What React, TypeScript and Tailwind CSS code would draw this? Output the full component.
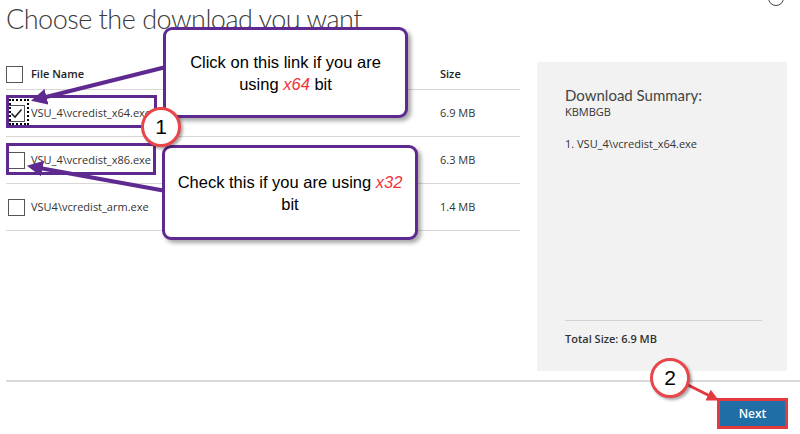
const files = [
  { name: "VSU_4\\vcredist_x64.exe", size: "6.9 MB", checked: true },
  { name: "VSU_4\\vcredist_x86.exe", size: "6.3 MB", checked: false },
  { name: "VSU4\\vcredist_arm.exe", size: "1.4 MB", checked: false },
];

const Box = ({ checked = false }: { checked?: boolean }) => {
  return (
    <span className="w-[17px] h-[17px] border-[1.5px] border-[#555] bg-white flex items-center justify-center shrink-0">
      {checked && (
        <svg width="13" height="13" viewBox="0 0 13 13">
          <path d="M1.5 6.5 L5 10 L11.5 2.5" fill="none" stroke="#222" strokeWidth="1.6" />
        </svg>
      )}
    </span>
  );
};

const Callout = ({ className, children }: { className: string; children: React.ReactNode }) => {
  return (
    <div
      className={`absolute bg-white border-[3px] border-[#5f2a8f] rounded-[9px] shadow-[3px_3px_4px_rgba(0,0,0,0.35)] flex items-center justify-center text-center text-[16.5px] leading-[22px] text-black font-['Liberation_Sans',Arial,sans-serif] ${className}`}
    >
      {children}
    </div>
  );
};

const Step = ({ n, className }: { n: string; className: string }) => {
  return (
    <div
      className={`absolute w-[40px] h-[40px] rounded-full bg-white border-[3px] border-[#e8464b] shadow-[2px_2px_3px_rgba(0,0,0,0.35)] flex items-center justify-center text-[21px] text-black font-['Liberation_Sans',Arial,sans-serif] ${className}`}
    >
      {n}
    </div>
  );
};

export default function App() {
  return (
    <div className="relative w-[800px] h-[434px] overflow-hidden bg-white font-['Open_Sans',sans-serif] text-[#333]">
      <h1 className="ml-[6px] -mt-[1px] text-[27px] leading-[40px] font-light tracking-[-0.5px] text-[#3a3a3a] font-['Lato',sans-serif]">
        Choose the download you want
      </h1>

      <div className="flex mt-[27px]">
        <div className="ml-[6px] w-[514px]">
          <div className="flex items-center h-[28px] -mt-[4px] pb-[2px] border-b border-[#d8d8d8] text-[11px] font-semibold text-[#222]">
            <Box />
            <span className="ml-[8px] w-[409px]">File Name</span>
            <span>Size</span>
          </div>
          {files.map((f) => (
            <div key={f.name} className="flex items-center h-[47px] border-b border-[#d8d8d8] text-[11px] text-[#333]">
              <span className="ml-[2px]">
                <Box checked={f.checked} />
              </span>
              <span className="ml-[6px] w-[409px]">{f.name}</span>
              <span>{f.size}</span>
            </div>
          ))}
        </div>

        <div className="ml-[17px] -mt-[4px] w-[250px] h-[309px] bg-[#f2f2f2] flex flex-col px-[28px] pt-[23px] pb-[24px]">
          <div className="text-[15px] leading-[20px] text-[#444] font-['Lato',sans-serif]">Download Summary:</div>
          <div className="text-[11px] leading-[14px] text-[#333]">KBMBGB</div>
          <div className="mt-[17px] text-[11px] text-[#333]">1. VSU_4\vcredist_x64.exe</div>
          <div className="mt-auto border-t border-[#d2d2d2] pt-[10px] w-[197px] text-[11px] font-semibold text-[#333]">
            Total Size: 6.9 MB
          </div>
        </div>
      </div>

      <div className="ml-[6px] mt-[9px] border-t-2 border-[#dadada]"></div>

      <div className="flex justify-end mr-[12px] mt-[16px]">
        <button className="w-[71px] h-[31px] bg-[#1f6fa6] border-[3px] border-[#e23a3f] text-white text-[12px] font-semibold">
          Next
        </button>
      </div>

      {/* close button, mostly cut off */}
      <div className="absolute left-[768px] -top-[10px] w-[16px] h-[16px] rounded-full border-[1.5px] border-[#444]"></div>

      {/* highlight frames */}
      <div className="absolute left-[6px] top-[95px] w-[151px] h-[33px] border-[3px] border-[#5f2a8f]"></div>
      <div className="absolute left-[6px] top-[143px] w-[150px] h-[32px] border-[3px] border-[#5f2a8f]"></div>
      <div className="absolute left-[9px] top-[99px] w-[20px] h-[26px] border-2 border-dotted border-black"></div>

      <svg className="absolute left-0 top-0 pointer-events-none" width="800" height="434">
        <defs>
          <marker id="pa" markerWidth="4" markerHeight="4" refX="2.2" refY="2" orient="auto">
            <path d="M0 0 L4 2 L0 4 Z" fill="#5f2a8f" />
          </marker>
          <marker id="ra" markerWidth="4" markerHeight="4" refX="2.2" refY="2" orient="auto">
            <path d="M0 0 L4 2 L0 4 Z" fill="#e23a3f" />
          </marker>
        </defs>
        <line x1="166" y1="67" x2="38" y2="99" stroke="#5f2a8f" strokeWidth="4" markerEnd="url(#pa)" />
        <line x1="166" y1="191" x2="34" y2="167" stroke="#5f2a8f" strokeWidth="4" markerEnd="url(#pa)" />
        <line x1="686" y1="384" x2="716" y2="399" stroke="#fff" strokeWidth="5" />
        <line x1="686" y1="384" x2="714" y2="398" stroke="#e23a3f" strokeWidth="3" markerEnd="url(#ra)" />
      </svg>

      <Callout className="left-[163px] top-[27px] w-[245px] h-[91px]">
        <p>
          Click on this link if you are
          <br />
          using <i className="text-[#f0323a]">x64</i> bit
        </p>
      </Callout>

      <Callout className="left-[162px] top-[145px] w-[256px] h-[95px]">
        <p>
          Check this if you are using <i className="text-[#f0323a]">x32</i>
          <br />
          bit
        </p>
      </Callout>

      <Step n="1" className="left-[141px] top-[107px]" />
      <Step n="2" className="left-[650px] top-[358px]" />
    </div>
  );
}
